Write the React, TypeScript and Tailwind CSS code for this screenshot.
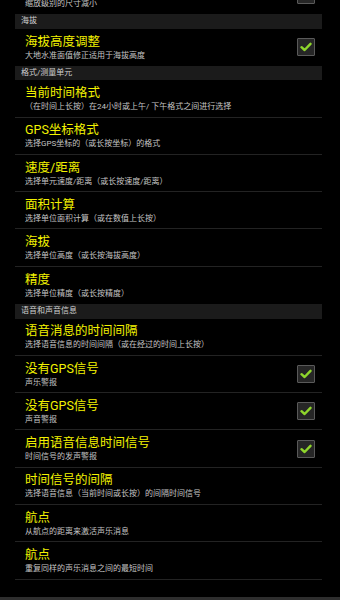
type Item = { title: string; sub: string; checked?: boolean };
type Section = { header?: string; items: Item[] };

const sections: Section[] = [
  { header: '海拔', items: [{ title: '海拔高度调整', sub: '大地水准面值修正适用于海拔高度', checked: true }] },
  {
    header: '格式/测量单元',
    items: [
      { title: '当前时间格式', sub: '（在时间上长按）在24小时或上午/ 下午格式之间进行选择' },
      { title: 'GPS坐标格式', sub: '选择GPS坐标的（或长按坐标）的格式' },
      { title: '速度/距离', sub: '选择单元速度/距离（或长按速度/距离）' },
      { title: '面积计算', sub: '选择单位面积计算（或在数值上长按）' },
      { title: '海拔', sub: '选择单位高度（或长按海拔高度）' },
      { title: '精度', sub: '选择单位精度（或长按精度）' },
    ],
  },
  {
    header: '语音和声音信息',
    items: [
      { title: '语音消息的时间间隔', sub: '选择语音信息的时间间隔（或在经过的时间上长按）' },
      { title: '没有GPS信号', sub: '声乐警报', checked: true },
      { title: '没有GPS信号', sub: '声音警报', checked: true },
      { title: '启用语音信息时间信号', sub: '时间信号的发声警报', checked: true },
      { title: '时间信号的间隔', sub: '选择语音信息（当前时间或长按）的间隔时间信号' },
      { title: '航点', sub: '从航点的距离来激活声乐消息' },
      { title: '航点', sub: '重复同样的声乐消息之间的最短时间' },
    ],
  },
];

const CheckBox = ({ checked }: { checked: boolean }) => (
  <div className="flex items-center justify-center size-[18px] shrink-0 rounded-[1px] border border-[#5a5a5a] bg-[#262626]">
    {checked && (
      <svg width="12" height="10" viewBox="0 0 12 10">
        <polyline
          points="1.5,5.2 4.6,8 10.5,1.8"
          fill="none"
          stroke="#8fd62c"
          strokeWidth="2.4"
          strokeLinecap="round"
          strokeLinejoin="round"
        />
      </svg>
    )}
  </div>
);

const Row = ({ item, last, className = '' }: { item: Item; last: boolean; className?: string }) => (
  <div
    className={`flex items-center h-[37.3px] shrink-0 pl-[10px] pr-[7px] ${
      last ? '' : 'border-b border-[#232323]'
    } ${className}`}
  >
    <div className="flex flex-col flex-1 min-w-0">
      <span className="text-[12.5px] leading-[15px] text-[#f2f200] whitespace-nowrap">{item.title}</span>
      <span className="mt-[2px] text-[8px] leading-[10px] text-[#c4c4c4] whitespace-nowrap">{item.sub}</span>
    </div>
    {item.checked !== undefined && <CheckBox checked={item.checked} />}
  </div>
);

export default function App() {
  return (
    <div
      className="flex flex-col w-[340px] h-[600px] bg-black overflow-hidden"
      style={{ fontFamily: 'Roboto, "Noto Sans CJK SC", sans-serif' }}
    >
      <div className="flex-1 flex flex-col overflow-hidden ml-[15px] mr-[18px]">
        <Row
          item={{ title: '地图缩放', sub: '缩放级别的尺寸减小', checked: false }}
          last
          className="mt-[-23.3px]"
        />
        {sections.map((section) => (
          <div key={section.header} className="flex flex-col">
            <div className="flex items-center h-[14.5px] pl-[6px] bg-[#1b1b1b] text-[8px] text-[#cfcfcf]">
              {section.header}
            </div>
            {section.items.map((item, i) => (
              <Row
                key={i}
                item={item}
                last={i === section.items.length - 1 && section.header !== '语音和声音信息'}
              />
            ))}
          </div>
        ))}
      </div>
      <div className="h-[3px] bg-[#2e2e2e] shrink-0" />
    </div>
  );
}
